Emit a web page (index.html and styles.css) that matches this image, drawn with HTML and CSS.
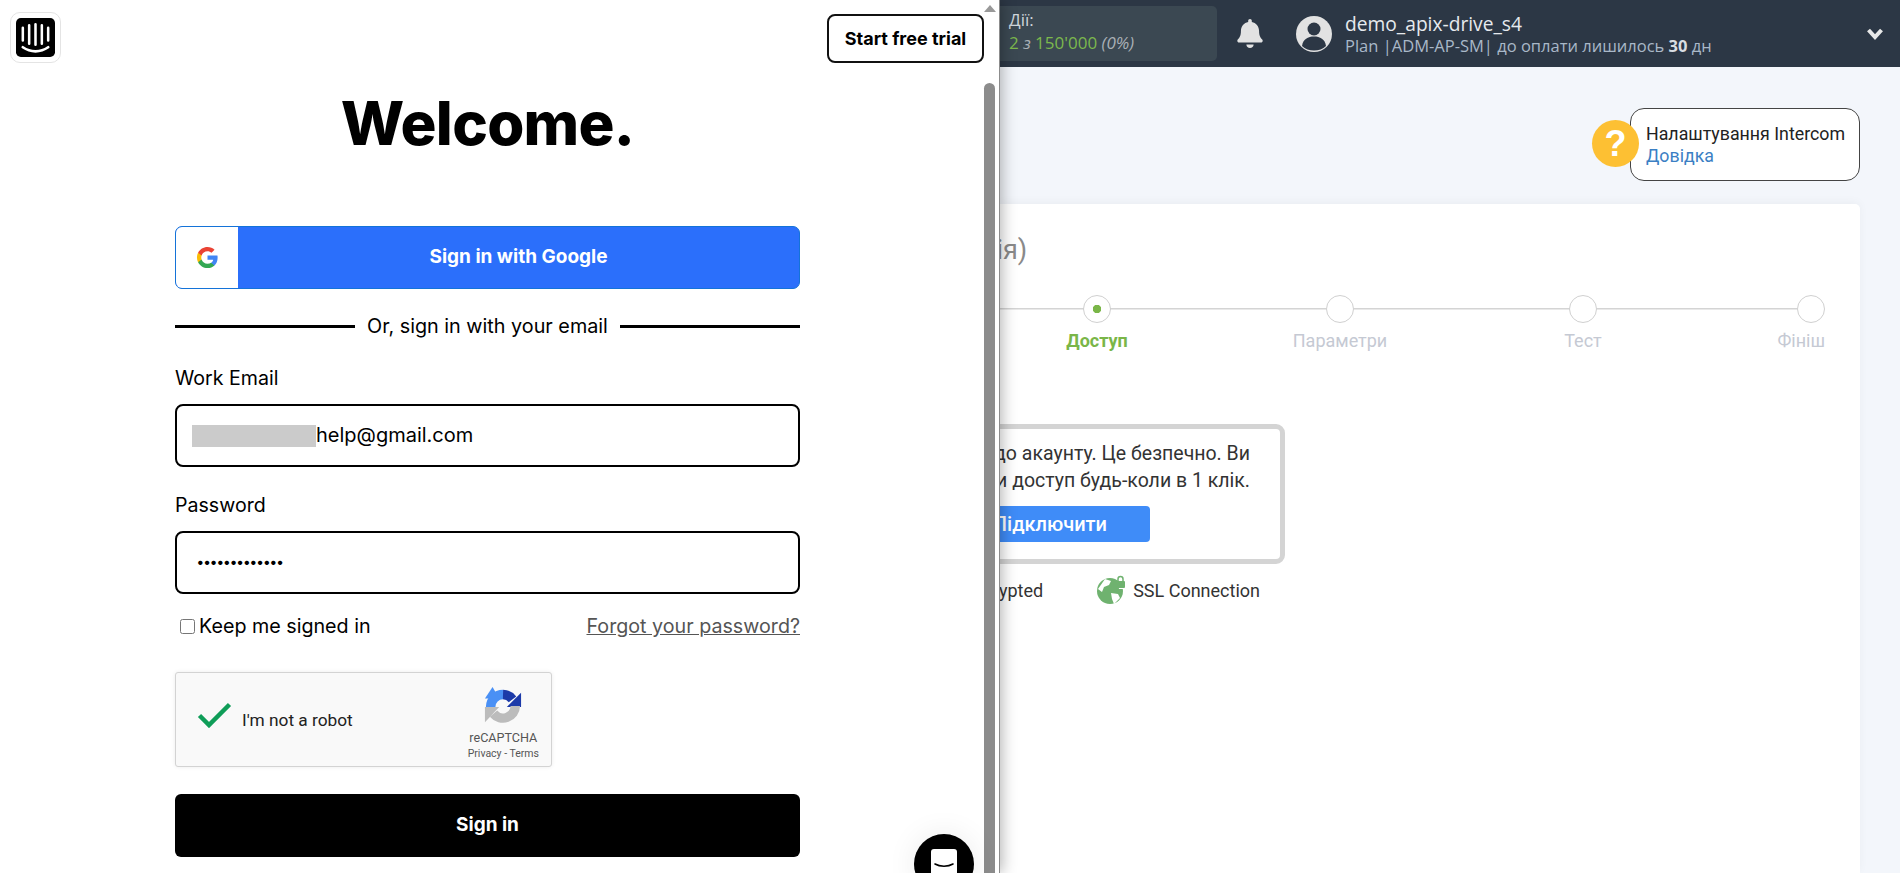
FILE: index.html
```html
<!DOCTYPE html>
<html lang="uk">
<head>
    <meta charset="UTF-8">
    <meta name="viewport" content="width=device-width, initial-scale=1.0">
    <title>Intercom sign in</title>
    <link rel="stylesheet" href="styles.css">
</head>
<body>
    <aside class="popup">
        <div class="login">
            <header class="login-head">
                <div class="logo-box">
                    <svg class="logo" viewBox="0 0 40 40">
                        <rect width="40" height="40" rx="5" fill="#000"/>
                        <path d="M7 10v13M13.500 7.500v19M20 6.500v21M26.500 7.500v19M33 10v13" stroke="#fff" stroke-width="2.600" stroke-linecap="round" fill="none"/>
                        <path d="M7 30c8 5.500 18 5.500 26 0" stroke="#fff" stroke-width="2.800" stroke-linecap="round" fill="none"/>
                    </svg>
                </div>
                <a class="trial-button">Start free trial</a>
            </header>

            <div class="form">
                <h1 class="title">Welcome.</h1>

                <button class="google-button">
                    <span class="google-icon">
                        <svg viewBox="0 0 48 48" width="23" height="23">
                            <path fill="#4285F4" d="M45.120 24.500c0-1.560-.140-3.060-.400-4.500H24v8.510h11.840c-.510 2.750-2.060 5.080-4.390 6.640v5.520h7.110c4.160-3.830 6.560-9.470 6.560-16.170z"/>
                            <path fill="#34A853" d="M24 46c5.940 0 10.920-1.970 14.560-5.330l-7.110-5.520c-1.970 1.320-4.490 2.100-7.450 2.100-5.730 0-10.580-3.870-12.310-9.070H4.340v5.700C7.960 41.070 15.400 46 24 46z"/>
                            <path fill="#FBBC05" d="M11.690 28.180C11.250 26.860 11 25.450 11 24s.250-2.860.690-4.180v-5.700H4.340C2.850 17.090 2 20.450 2 24c0 3.550.850 6.910 2.340 9.880l7.350-5.700z"/>
                            <path fill="#EA4335" d="M24 10.750c3.230 0 6.130 1.110 8.410 3.290l6.310-6.310C34.910 4.180 29.930 2 24 2 15.400 2 7.960 6.930 4.340 14.120l7.350 5.700c1.730-5.200 6.580-9.070 12.310-9.070z"/>
                        </svg>
                    </span>
                    <span class="google-text">Sign in with Google</span>
                </button>

                <div class="divider"><span>Or, sign in with your email</span></div>

                <label class="field-label">Work Email</label>
                <div class="field"><span class="blur"></span><span>help@gmail.com</span></div>

                <label class="field-label password-label">Password</label>
                <div class="field"><span class="dots">•••••••••••••</span></div>

                <div class="options">
                    <label class="keep"><input type="checkbox" class="keep-box">Keep me signed in</label>
                    <a class="forgot">Forgot your password?</a>
                </div>

                <div class="captcha">
                    <svg class="captcha-check" viewBox="0 0 35 26" width="35" height="26">
                        <path d="M2.500 13.500l9.500 9.500L32.500 2.500" stroke="#0f9d58" stroke-width="4.500" fill="none"/>
                    </svg>
                    <span class="captcha-text">I'm not a robot</span>
                    <div class="captcha-brand">
                        <svg viewBox="0 0 40 40" width="38" height="38">
                            <path d="M7 21A13 13 0 0 1 20 8" stroke="#4a90f5" stroke-width="10" fill="none"/>
                            <path d="M9 0l7 12L1 12z" fill="#4a90f5"/>
                            <path d="M20 8a13 13 0 0 1 10 5" stroke="#1c3aa9" stroke-width="10" fill="none"/>
                            <path d="M39 6v15H24z" fill="#1c3aa9"/>
                            <path d="M33 20A13 13 0 0 1 10 28" stroke="#bcbcbc" stroke-width="10" fill="none"/>
                            <path d="M1 21h15L1 37z" fill="#bcbcbc"/>
                        </svg>
                        <span class="captcha-name">reCAPTCHA</span>
                        <span class="captcha-links">Privacy - Terms</span>
                    </div>
                </div>

                <button class="signin-button">Sign in</button>
            </div>
        </div>

        <div class="scrollbar">
            <span class="scroll-arrow"></span>
            <span class="scroll-thumb"></span>
        </div>

        <div class="launcher">
            <svg viewBox="0 0 26 30" width="26" height="30">
                <path d="M3 0h20a3 3 0 0 1 3 3v27H0V3a3 3 0 0 1 3-3z" fill="#fff"/>
                <path d="M4 15c5 3 13 3 18 0" stroke="#000" stroke-width="1.600" stroke-linecap="round" fill="none"/>
            </svg>
        </div>
    </aside>

    <main class="app">
        <div class="topbar">
            <div class="actions">
                <div class="actions-title">Дії:</div>
                <div class="actions-count"><b>2</b> <i>з</i> <b>150'000</b> <i>(0%)</i></div>
            </div>
            <svg class="bell" viewBox="0 0 448 512" width="26" height="29">
                <path fill="#e2e2e2" d="M224 512c35.320 0 63.970-28.650 63.970-64H160.030c0 35.350 28.650 64 63.970 64zm215.390-149.710c-19.320-20.760-55.470-51.990-55.470-154.290 0-77.700-54.480-139.900-127.940-155.160V32c0-17.670-14.320-32-31.980-32s-31.980 14.330-31.980 32v20.840C118.560 68.100 64.080 130.300 64.080 208c0 102.300-36.150 133.530-55.470 154.290-6 6.450-8.660 14.160-8.610 21.710.110 16.400 12.980 32 32.100 32h383.800c19.120 0 32-15.600 32.100-32 .050-7.550-2.610-15.270-8.610-21.710z"/>
            </svg>
            <svg class="avatar" viewBox="0 0 36 36" width="36" height="36">
                <circle cx="18" cy="18" r="18" fill="#e2e2e2"/>
                <circle cx="18" cy="13" r="6.500" fill="#2c3745"/>
                <path d="M6 30c1-7 6-9.500 12-9.500S29 23 30 30c-3 3-7.500 4.500-12 4.500S9 33 6 30z" fill="#2c3745"/>
            </svg>
            <div class="user">
                <div class="user-name">demo_apix-drive_s4</div>
                <div class="user-plan">Plan |ADM-AP-SM| до оплати лишилось <b>30</b> дн</div>
            </div>
            <svg class="chevron" viewBox="0 0 18 14" width="18" height="14">
                <path d="M2.500 3l6.500 7 6.500-7" stroke="#e8e8e8" stroke-width="4" fill="none"/>
            </svg>
        </div>

        <div class="page">
            <div class="help">
                <span class="help-mark">?</span>
                <div class="help-bubble">
                    <div>Налаштування Intercom</div>
                    <a class="help-link">Довідка</a>
                </div>
            </div>

            <section class="card">
                <h2 class="card-title">Intercom (авторизація)</h2>

                <div class="steps">
                    <div class="step active"><span class="dot"></span><span class="step-name">Доступ</span></div>
                    <div class="step"><span class="dot"></span><span class="step-name">Параметри</span></div>
                    <div class="step"><span class="dot"></span><span class="step-name">Тест</span></div>
                    <div class="step last"><span class="dot"></span><span class="step-name">Фініш</span></div>
                </div>

                <div class="connect">
                    <p class="connect-text">Надайте доступ до акаунту. Це безпечно. Ви<br>зможете відкликати доступ будь-коли в 1 клік.</p>
                    <button class="connect-button">Підключити</button>
                </div>

                <div class="secure">
                    <span>Encrypted</span>
                    <span class="ssl">
                        <svg viewBox="0 0 30 30" width="30" height="30">
                            <circle cx="14" cy="16" r="13" fill="#6fb26f"/>
                            <path d="M9 4l6 2-2 4-5 2-2 5-4-3zM15 18l7 1 2 4-6 6-2-5zM22 8l7 1 0 5-6 0z" fill="#fff"/>
                            <rect x="20" y="6" width="9" height="7" rx="1" fill="#6fb26f"/>
                            <path d="M22 6.500V4a2.500 2.500 0 0 1 5 0v2.500" stroke="#6fb26f" stroke-width="1.500" fill="none"/>
                        </svg>
                        SSL Connection
                    </span>
                </div>
            </section>
        </div>
    </main>
</body>
</html>
```

FILE: styles.css
```css
* {
    box-sizing: border-box;
}
body {
    margin: 0;
    height: 873px;
    overflow: hidden;
    display: flex;
    background-color: #f3f6fb;
    font-family: 'Roboto', sans-serif;
    color: #333;
}

/* left popup with the sign in form */
.popup {
    position: relative;
    z-index: 2;
    flex: 0 0 1000px;
    height: 873px;
    display: flex;
    overflow: hidden;
    background-color: #fff;
    border-right: 1px solid #8c8c8c;
    box-shadow: 2px 0 14px rgba(0, 0, 0, 0.3);
    font-family: 'Inter', sans-serif;
    color: #000;
}
.login {
    flex: 0 0 984px;
}
.login-head {
    display: flex;
    justify-content: space-between;
    align-items: flex-start;
    padding: 12px 0 0 10px;
    height: 88px;
}
.logo-box {
    width: 51px;
    height: 51px;
    padding: 5px;
    border: 1px solid #e4e4e4;
    border-radius: 10px;
}
.logo {
    display: block;
    width: 39px;
    height: 39px;
}
.trial-button {
    width: 157px;
    height: 49px;
    margin-top: 2px;
    border: 2px solid #111;
    border-radius: 8px;
    display: flex;
    align-items: center;
    justify-content: center;
    font-size: 18px;
    font-weight: 700;
}
.form {
    width: 625px;
    margin-left: 175px;
}
.title {
    margin: 0 0 45px;
    height: 93px;
    line-height: 70px;
    text-align: center;
    font-size: 60px;
    font-weight: 800;
    letter-spacing: -0.7px;
}
.google-button {
    width: 100%;
    height: 63px;
    padding: 0;
    display: flex;
    background-color: #2b6ffb;
    border: 1px solid #1473d8;
    border-radius: 7px;
    overflow: hidden;
    color: #fff;
    font-family: inherit;
    font-size: 19px;
    font-weight: 700;
}
.google-icon {
    flex: 0 0 62px;
    height: 100%;
    display: flex;
    align-items: center;
    justify-content: center;
    background-color: #fff;
}
.google-text {
    flex: 1;
    align-self: center;
    padding-bottom: 2px;
}
.divider {
    margin-top: 25px;
    display: flex;
    align-items: center;
    gap: 12px;
    height: 24px;
    font-size: 19.8px;
}
.divider::before,
.divider::after {
    content: "";
    flex: 1;
    height: 3px;
    background-color: #000;
}
.field-label {
    display: block;
    margin-top: 28px;
    height: 24px;
    line-height: 24px;
    font-size: 19.6px;
}
.password-label {
    margin-top: 26px;
}
.field {
    margin-top: 14px;
    height: 63px;
    padding: 0 0 2px 15px;
    display: flex;
    align-items: center;
    border: 2px solid #000;
    border-radius: 8px;
    font-size: 20px;
}
.blur {
    width: 124px;
    height: 22px;
    margin-top: 2px;
    background-color: #cbcbcb;
}
.dots {
    padding-left: 5px;
    font-size: 14px;
    font-weight: 700;
}
.options {
    margin-top: 18px;
    height: 28px;
    padding-left: 5px;
    display: flex;
    justify-content: space-between;
    align-items: center;
    font-size: 19.7px;
}
.keep {
    display: flex;
    align-items: center;
    gap: 4px;
}
.keep-box {
    width: 15px;
    height: 15px;
    margin: 0;
}
.forgot {
    color: #555;
    text-decoration: underline;
}
.captcha {
    margin-top: 32px;
    width: 377px;
    height: 95px;
    padding: 0 12px 0 21px;
    display: flex;
    align-items: center;
    background-color: #f9f9f9;
    border: 1px solid #d3d3d3;
    border-radius: 3px;
    box-shadow: 0 0 4px rgba(0, 0, 0, 0.08);
    font-family: 'Roboto', sans-serif;
}
.captcha-check {
    margin-bottom: 10px;
}
.captcha-text {
    margin-left: 10px;
    font-size: 17.3px;
    color: #222;
}
.captcha-brand {
    margin-left: auto;
    padding-top: 8px;
    display: flex;
    flex-direction: column;
    align-items: center;
    color: #555;
}
.captcha-name {
    margin-top: 5px;
    font-size: 12.6px;
    line-height: 16px;
}
.captcha-links {
    margin-top: 1px;
    font-size: 10.5px;
    line-height: 13px;
}
.signin-button {
    display: block;
    margin-top: 27px;
    width: 100%;
    height: 63px;
    padding: 0 0 2px;
    background-color: #000;
    border: none;
    border-radius: 6px;
    color: #fff;
    font-family: inherit;
    font-size: 19px;
    font-weight: 700;
}
.scrollbar {
    flex: 0 0 15px;
    display: flex;
    flex-direction: column;
    align-items: flex-start;
}
.scroll-arrow {
    margin-top: 5px;
    border-left: 6px solid transparent;
    border-right: 6px solid transparent;
    border-bottom: 7px solid #999;
}
.scroll-thumb {
    margin-top: 71px;
    width: 11px;
    flex: 1;
    background-color: #8c8c8c;
    border-radius: 6px 6px 0 0;
}
.launcher {
    position: absolute;
    left: 914px;
    top: 834px;
    width: 60px;
    height: 60px;
    padding-top: 15px;
    display: flex;
    justify-content: center;
    background-color: #000;
    border-radius: 50%;
    box-shadow: 0 0 30px rgba(0, 0, 0, 0.08);
}

/* page behind the popup */
.app {
    flex: 1;
    min-width: 0;
    display: flex;
    flex-direction: column;
}
.topbar {
    flex: 0 0 67px;
    display: flex;
    align-items: center;
    background-color: #2c3745;
    font-family: 'Open Sans', sans-serif;
}
.actions {
    width: 217px;
    height: 55px;
    padding: 2px 0 0 9px;
    background-color: #3b4852;
    border-radius: 0 5px 5px 0;
    color: #cfd6dc;
    font-size: 17px;
    line-height: 23px;
}
.actions-count b {
    font-weight: 400;
    color: #7cb84d;
}
.actions-count i {
    color: #a9b0b6;
}
.bell {
    margin-left: 20px;
}
.avatar {
    margin-left: 33px;
}
.user {
    margin-left: 13px;
    flex: 1;
}
.user-name {
    font-size: 19.2px;
    line-height: 24px;
    color: #e6eaee;
}
.user-plan {
    font-size: 16.5px;
    line-height: 20px;
    color: #a9b8c8;
}
.user-plan b {
    color: #d8dde2;
}
.chevron {
    margin-right: 16px;
}
.page {
    flex: 1;
    min-height: 0;
    display: flex;
    flex-direction: column;
    padding: 41px 40px 0 0;
}
.help {
    display: flex;
    justify-content: flex-end;
    align-items: center;
    height: 73px;
}
.help-mark {
    width: 47px;
    height: 47px;
    margin: 0 -9px 2px 0;
    z-index: 1;
    display: flex;
    align-items: center;
    justify-content: center;
    background-color: #fdc033;
    border-radius: 50%;
    color: #fff;
    font-family: 'Liberation Sans', sans-serif;
    font-size: 36px;
    font-weight: 700;
}
.help-bubble {
    width: 230px;
    height: 73px;
    padding: 14px 0 0 15px;
    background-color: #fff;
    border: 1px solid #444;
    border-radius: 14px;
    font-size: 17.8px;
    line-height: 22px;
    color: #222;
}
.help-link {
    color: #3b7fc4;
}
.card {
    flex: 1;
    margin-top: 23px;
    padding: 30px 35px 0 0;
    overflow: hidden;
    background-color: #fff;
    border-radius: 0 5px 0 0;
    box-shadow: 0 -2px 10px rgba(0, 0, 0, 0.04);
    display: flex;
    flex-direction: column;
    align-items: flex-end;
}
.card-title {
    align-self: flex-start;
    margin: 0 0 0 -260px;
    height: 32px;
    font-size: 27px;
    line-height: 32px;
    font-weight: 400;
    color: #8a8a8a;
    white-space: nowrap;
}
.steps {
    align-self: stretch;
    margin-top: 29px;
    display: flex;
    justify-content: flex-end;
    background: linear-gradient(#d4d4d4, #d4d4d4) no-repeat 0 13px / calc(100% - 14px) 1.5px;
}
.step {
    flex: 0 0 243px;
    display: flex;
    flex-direction: column;
    align-items: center;
}
.step.last {
    flex-basis: 120.5px;
    align-items: flex-end;
}
.dot {
    width: 28px;
    height: 28px;
    background-color: #fff;
    border: 1px solid #d0d0d0;
    border-radius: 50%;
}
.step.active .dot {
    background: radial-gradient(circle, #7ab648 0 4px, #fff 4.500px);
}
.step-name {
    margin-top: 7px;
    font-size: 18px;
    line-height: 22px;
    color: #c5c9d3;
}
.step.active .step-name {
    color: #7ab648;
    font-weight: 700;
}
.connect {
    flex: 0 0 140px;
    width: 500px;
    margin: 72px 540px 0 0;
    padding: 11px 30px 0 0;
    display: flex;
    flex-direction: column;
    align-items: flex-end;
    border: 5px solid #d4d4d4;
    border-radius: 9px;
}
.connect-text {
    margin: 0;
    text-align: right;
    font-size: 19.5px;
    line-height: 27px;
    white-space: nowrap;
    color: #333;
}
.connect-button {
    width: 201px;
    height: 36px;
    margin: 12px 100px 0 0;
    padding: 0 43px 0 0;
    text-align: right;
    background-color: #3f8cf8;
    border: none;
    border-radius: 4px;
    color: #fff;
    font-family: inherit;
    font-size: 20px;
    font-weight: 500;
}
.secure {
    margin: 11px 565px 0 0;
    display: flex;
    align-items: center;
    gap: 53px;
    font-size: 18px;
    color: #333;
    white-space: nowrap;
}
.ssl {
    display: flex;
    align-items: center;
    gap: 7px;
}
```
